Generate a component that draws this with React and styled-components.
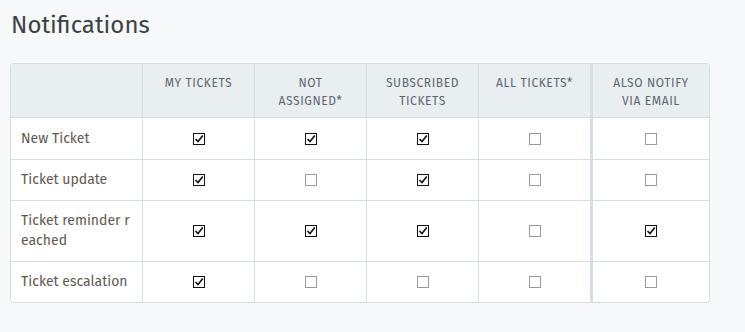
import React from 'react';
import styled, { createGlobalStyle } from 'styled-components';

const GlobalStyle = createGlobalStyle`
    body {
        margin: 0;
        background: #f6f8f9;
        font-family: "Fira Sans", "Lato", "Open Sans", sans-serif;
    }
`;

const Page = styled.div`
    padding: 10px 10px 0 10px;
    width: 700px;
`;

const Title = styled.h1`
    margin: 0 0 23px 1px;
    font-size: 24px;
    font-weight: 400;
    color: #3c4247;
    line-height: 30px;
`;

const Table = styled.table`
    width: 700px;
    border-collapse: separate;
    border-spacing: 0;
    table-layout: fixed;
    background: #fff;
    border: 1px solid #d5dee2;
    border-radius: 4px;
    overflow: hidden;
`;

const Col = styled.col`
    width: ${p => (p.$w ? `${p.$w}px` : 'auto')};
`;

const Th = styled.th`
    background: #e9eef0;
    color: #5d6770;
    font-size: 12px;
    font-weight: 400;
    letter-spacing: 0.6px;
    text-transform: uppercase;
    line-height: 18px;
    height: 54px;
    padding: 10px 8px 0;
    vertical-align: top;
    text-align: center;
    box-sizing: border-box;
    border-bottom: 1px solid #d5dee2;
    border-left: ${p => (p.$thick ? '3px' : '1px')} solid #d5dee2;
    &:first-child {
        border-left: none;
    }
`;

const Td = styled.td`
    font-size: 14px;
    color: #5f5850;
    line-height: 20px;
    height: ${p => (p.$tall ? '61px' : '41px')};
    padding: 0 10px;
    box-sizing: border-box;
    text-align: ${p => (p.$label ? 'left' : 'center')};
    border-top: ${p => (p.$first ? 'none' : '1px solid #d5dee2')};
    border-left: ${p => (p.$thick ? '3px' : '1px')} solid #d5dee2;
    &:first-child {
        border-left: none;
    }
    word-break: break-all;
`;

const BoxSvg = styled.svg`
    display: block;
    margin: 0 auto;
`;

const Box = ({ checked }) => (
    <BoxSvg width="12" height="12" viewBox="0 0 12 12">
        <rect x="0.5" y="0.5" width="11" height="11" fill="#fff" stroke={checked ? '#111' : '#9a9a9a'} />
        {checked && <path d="M2.5 6 L5 8.6 L9.8 2.5" fill="none" stroke="#111" strokeWidth="1.6" />}
    </BoxSvg>
);

const columns = [
    ['My tickets'],
    ['Not', 'assigned*'],
    ['Subscribed', 'tickets'],
    ['All tickets*'],
    ['Also notify', 'via email'],
];

const rows = [
    { name: 'New Ticket', values: [1, 1, 1, 0, 0] },
    { name: 'Ticket update', values: [1, 0, 1, 0, 0] },
    { name: 'Ticket reminder reached', values: [1, 1, 1, 0, 1], tall: true },
    { name: 'Ticket escalation', values: [1, 0, 0, 0, 0] },
];

export default function App() {
    return (
        <Page>
            <GlobalStyle />
            <Title>Notifications</Title>
            <Table>
                <colgroup>
                    <Col $w={131} />
                    <Col $w={112} />
                    <Col $w={112} />
                    <Col $w={112} />
                    <Col $w={112} />
                    <Col />
                </colgroup>
                <thead>
                    <tr>
                        <Th />
                        {columns.map((lines, i) => (
                            <Th key={i} $thick={i === 4}>
                                {lines[0]}
                                {lines[1] && <br />}
                                {lines[1]}
                            </Th>
                        ))}
                    </tr>
                </thead>
                <tbody>
                    {rows.map((r, ri) => (
                        <tr key={r.name}>
                            <Td $label $first={ri === 0} $tall={r.tall}>{r.name}</Td>
                            {r.values.map((v, i) => (
                                <Td key={i} $first={ri === 0} $tall={r.tall} $thick={i === 4}>
                                    <Box checked={!!v} />
                                </Td>
                            ))}
                        </tr>
                    ))}
                </tbody>
            </Table>
        </Page>
    );
}
